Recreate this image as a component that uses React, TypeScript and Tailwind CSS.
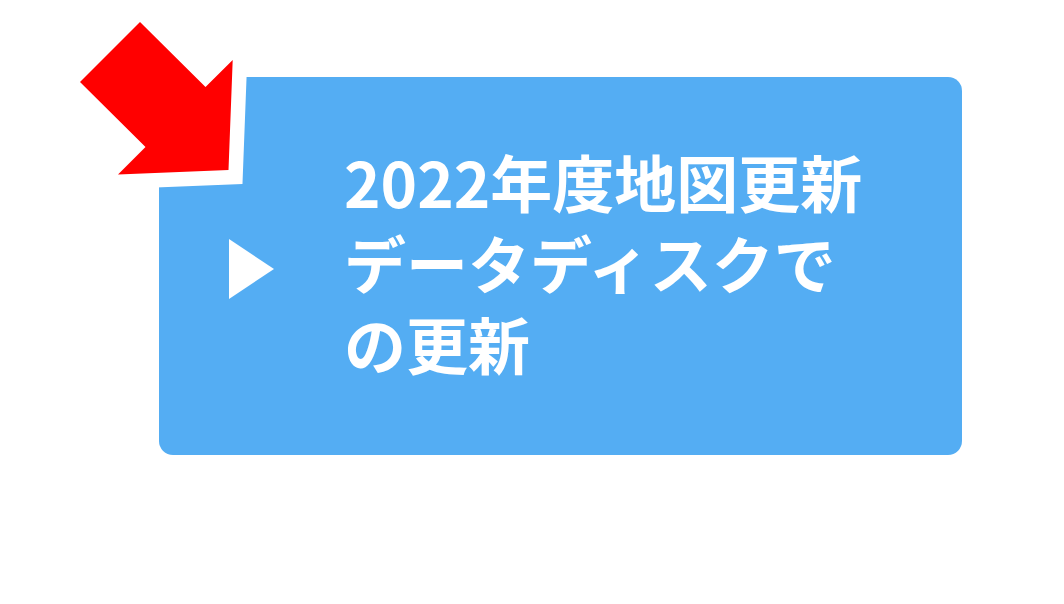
import React from 'react';
import { clsx } from 'clsx';

const Triangle = () => (
  <svg viewBox="0 0 45 60" className="h-[60px] w-[45px] shrink-0" aria-hidden="true">
    <path d="M0 0 L45 30 L0 60 Z" fill="#fff" />
  </svg>
);

const PointerArrow = ({ className }: { className?: string }) => (
  <svg
    viewBox="0 0 180 180"
    className={clsx('pointer-events-none h-[180px] w-[180px]', className)}
    aria-hidden="true"
  >
    <path
      d="M73 12 L138.5 77 L165.7 50 L161.5 160 L51 164.5 L78.5 137 L13 72 Z"
      fill="#f00"
      stroke="#fff"
      strokeWidth="29"
      paintOrder="stroke"
    />
  </svg>
);

const App = () => {
  return (
    <main className="min-h-screen bg-white pt-[77px] pr-[102px] pb-[149px] pl-[159px]">
      <div className="relative">
        <a
          href="#update"
          className="flex items-center gap-[70px] rounded-[14px] bg-[#54adf3] pt-[64px] pr-[90px] pb-[59px] pl-[70px] text-white"
        >
          <Triangle />
          <span className="pb-3 font-['Noto_Sans_CJK_JP',sans-serif] text-[62px] leading-[81px] font-bold">
            2022年度地図更新
            <br />
            データディスクで
            <br />
            の更新
          </span>
        </a>
        <PointerArrow className="absolute -top-[67px] -left-[92px]" />
      </div>
    </main>
  );
};

export default App;
